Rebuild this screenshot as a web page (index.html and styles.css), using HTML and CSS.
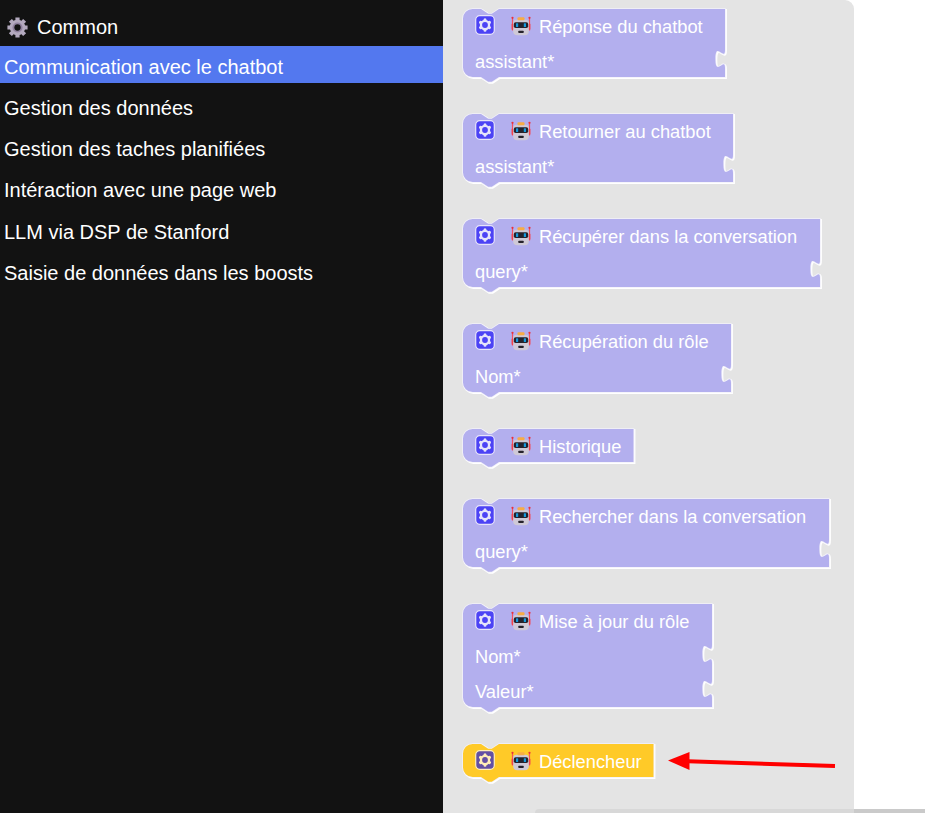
FILE: index.html
```
<!DOCTYPE html>
<html lang="fr">
<head>
<meta charset="utf-8">
<title>Boosts</title>
<link rel="stylesheet" href="styles.css">
</head>
<body>
<svg class="defs" aria-hidden="true">
  <symbol id="cog" viewBox="0 0 20 20">
    <rect class="cog-box" x="0.7" y="0.7" width="18.6" height="18.6" rx="4"/>
    <path class="cog-teeth" d="M10 4.800v10.400M5.500 7.400l9 5.200M5.500 12.600l9-5.200"/>
    <circle class="cog-ring" cx="10" cy="10" r="5.200"/>
    <circle class="cog-hole" cx="10" cy="10" r="2.900"/>
  </symbol>
  <symbol id="robot" viewBox="0 0 20 20">
    <path d="M1.500 1.500v13M18.500 1.500v13" stroke="#f4525c" stroke-width="1.200"/>
    <circle cx="1.500" cy="1.800" r="1.100" fill="#e8323c"/><circle cx="18.500" cy="1.800" r="1.100" fill="#e8323c"/>
    <rect x="0.600" y="7.500" width="2" height="6.500" rx="1" fill="#f4434c"/><rect x="17.400" y="7.500" width="2" height="6.500" rx="1" fill="#f4434c"/>
    <path d="M2.200 7Q2.200 3.800 5.400 3.800H14.600Q17.800 3.800 17.800 7V15Q17.800 19.300 13.600 19.300H6.400Q2.200 19.300 2.200 15Z" fill="#cfc9d6"/>
    <rect x="6.500" y="1.200" width="7" height="3" rx="1" fill="#f6ac45"/>
    <rect x="2.800" y="6.200" width="14.400" height="5.800" rx="1.800" fill="#25222b"/>
    <rect x="5" y="7.200" width="2.200" height="3.800" rx="0.500" fill="#1699dc"/><rect x="12.800" y="7.200" width="2.200" height="3.800" rx="0.500" fill="#1699dc"/>
    <rect x="7.400" y="14.800" width="5.200" height="2.200" rx="0.500" fill="#25222b"/>
  </symbol>
</svg>
<main class="app">
  <nav class="toolbox">
    <div class="item head">
      <svg class="gear" viewBox="0 0 20 20"><path d="M10 .4V19.600M.4 10H19.600M3.200 3.200L16.800 16.800M16.800 3.200L3.200 16.800" stroke="#b3a9be" stroke-width="4" stroke-linecap="butt"/><circle cx="10" cy="10" r="7.400" fill="#b3a9be"/><circle cx="10" cy="10" r="4.800" fill="#8f809e"/><circle cx="10" cy="10" r="3" fill="#121212"/></svg>
      <span>Common</span>
    </div>
    <div class="item selected">Communication avec le chatbot</div>
    <div class="item">Gestion des données</div>
    <div class="item">Gestion des taches planifiées</div>
    <div class="item">Intéraction avec une page web</div>
    <div class="item">LLM via DSP de Stanford</div>
    <div class="item">Saisie de données dans les boosts</div>
  </nav>
  <section class="flyout" id="flyout"></section>
  <div class="scrollbar"></div>
  <svg class="arrow" viewBox="0 0 170 24"><path d="M20 11.300L167 16" stroke="#f00" stroke-width="4"/><path d="M0 10.500L21.500 2V20Z" fill="#f00"/></svg>
</main>
<script src="blocks.js"></script>
</body>
</html>
```
FILE: blocks.js
```
const blocks = [
  { title: 'Réponse du chatbot', inputs: ['assistant*'], width: 262 },
  { title: 'Retourner au chatbot', inputs: ['assistant*'], width: 270 },
  { title: 'Récupérer dans la conversation', inputs: ['query*'], width: 357 },
  { title: 'Récupération du rôle', inputs: ['Nom*'], width: 268 },
  { title: 'Historique', inputs: [], width: 170.5 },
  { title: 'Rechercher dans la conversation', inputs: ['query*'], width: 366 },
  { title: 'Mise à jour du rôle', inputs: ['Nom*', 'Valeur*'], width: 249 },
  { title: 'Déclencheur', inputs: [], width: 190.5, trigger: true }
];

// Puzzle-piece outline: notch on top, sockets on the right, tab below.
function outline(width, sockets) {
  const bottom = 33 + sockets * 35;
  let d = `M0 9.600A9.600 9.600 0 0 1 9.600 0H18l7.200 4.800h3.600l7.200-4.800H${width}`;
  for (let i = 0; i < sockets; i++) {
    d += `V${41 + i * 35}c0 12-9.600-9.600-9.600 9s9.600-3 9.600 9`;
  }
  return d + `V${bottom}H36l-7.200 4.800h-3.600l-7.200-4.800H9.600A9.600 9.600 0 0 1 0 ${bottom - 9.6}Z`;
}

document.getElementById('flyout').innerHTML = blocks.map(b => {
  const d = outline(b.width, b.inputs.length);
  return `<article class="block${b.trigger ? ' trigger' : ''}">
    <svg class="shape"><path class="edge" d="${d}" transform="translate(.9 .9)"/><path class="rim" d="${d}"/><path class="body" d="${d}"/></svg>
    <div class="row"><svg class="cog"><use href="#cog"/></svg><svg class="robot"><use href="#robot"/></svg><span>${b.title}</span></div>
    ${b.inputs.map(t => `<div class="row">${t}</div>`).join('')}
  </article>`;
}).join('');
```
FILE: styles.css
```
* { box-sizing: border-box; }
body { margin: 0; overflow: hidden; background: #fff; font-family: "Liberation Sans", Arial, sans-serif; }
.defs { position: absolute; width: 0; height: 0; }
.app { position: relative; display: flex; width: 925px; height: 813px; }
.toolbox { width: 443px; padding-top: 5px; background: #121212; color: #fff; font-size: 20px; }
.item { display: flex; align-items: center; height: 37.200px; margin-bottom: 4px; padding: 5.400px 4px 0; white-space: nowrap; }
.item.selected { background: #5378ef; }
.head { height: 37px; padding: 7px 7px 0; gap: 9px; }
.gear { width: 21px; height: 21px; }
.flyout { display: flex; flex-direction: column; gap: 35px; width: 411px; padding: 9px 0 0 20px; background: #e4e4e4; border-radius: 0 9px 0 0; }
.block { position: relative; --fill: #b3afee; --cog: #4c43f5; --light: #e6e4fa; color: #fff; font-size: 18.300px; }
.trigger { --fill: #ffca28; --cog: #6250a4; --light: #ffefb8; }
.shape { position: absolute; left: 0; top: 0; width: 100%; height: 100%; overflow: visible; }
.edge { fill: #fff; stroke: #fff; stroke-width: 2; }
.rim { fill: none; stroke: #f2f1fa; stroke-width: 1.600; }
.body { fill: var(--fill); }
.row { position: relative; display: flex; align-items: center; height: 35px; padding-left: 12px; white-space: nowrap; }
.cog { width: 20px; height: 20px; margin-top: -3px; }
.robot { width: 20px; height: 20px; margin: -2px 8px 0 16px; }
.cog-box { fill: var(--cog); stroke: var(--light); stroke-width: 1.200; }
.cog-teeth { fill: none; stroke: var(--light); stroke-width: 3; stroke-linecap: round; }
.cog-ring { fill: var(--light); }
.cog-hole { fill: var(--cog); }
.scrollbar { position: absolute; left: 535px; right: 0; bottom: 0; height: 4px; background: linear-gradient(to right, #d8d8d8 319px, #cacaca 319px); border-radius: 4px 0 0 0; }
.arrow { position: absolute; left: 668px; top: 750px; width: 170px; height: 24px; }
```
